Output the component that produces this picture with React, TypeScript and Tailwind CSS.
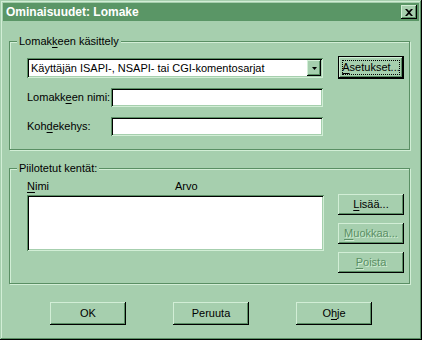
const raised =
  "shadow-[inset_-1px_-1px_0_#000,inset_1px_1px_0_#d2eed6,inset_-2px_-2px_0_#5a8f64]";
const sunken =
  "shadow-[inset_1px_1px_0_#5a8f64,inset_-1px_-1px_0_#d2eed6,inset_2px_2px_0_#000,inset_-2px_-2px_0_#a6cfae]";

function U({ children }: { children: string }) {
  return <span className="underline underline-offset-[2px]">{children}</span>;
}

function Btn({
  children,
  className = "",
  disabled = false,
}: {
  children: React.ReactNode;
  className?: string;
  disabled?: boolean;
}) {
  return (
    <div
      className={`flex items-center justify-center bg-[#a6cfae] ${raised} ${
        disabled ? "text-[#5a8f64] [text-shadow:1px_1px_0_#d2eed6]" : "text-black"
      } ${className}`}
    >
      {children}
    </div>
  );
}

function Group({
  title,
  className = "",
  children,
}: {
  title: React.ReactNode;
  className?: string;
  children: React.ReactNode;
}) {
  return (
    <div
      className={`relative border border-[#5a8f64] shadow-[1px_1px_0_#d2eed6,inset_1px_1px_0_#d2eed6] ${className}`}
    >
      <div className="absolute -top-[8px] left-[7px] bg-[#a6cfae] px-[2px] leading-[14px]">
        {title}
      </div>
      {children}
    </div>
  );
}

export default function App() {
  return (
    <div className="h-[340px] w-[422px] bg-[#a6cfae] p-[3px] font-['Liberation_Sans',Arial,sans-serif] text-[11px] text-black shadow-[inset_-1px_-1px_0_#000,inset_1px_1px_0_#a6cfae,inset_-2px_-2px_0_#5a8f64,inset_2px_2px_0_#d2eed6]">
      {/* title bar */}
      <div className="flex h-[18px] items-center justify-between bg-[#5a9666] pl-[3px] pr-[2px]">
        <span className="text-[12px] font-bold text-white">Ominaisuudet: Lomake</span>
        <div className={`flex h-[14px] w-[16px] items-center justify-center bg-[#a6cfae] ${raised}`}>
          <svg width="8" height="7" viewBox="0 0 8 7">
            <path d="M0 0h2l2 2 2-2h2L5 3.5 8 7H6L4 5 2 7H0l3-3.5z" fill="#000" />
          </svg>
        </div>
      </div>

      <div className="px-[6px]">
        <Group
          title={
            <>
              Lomak<U>k</U>een käsittely
            </>
          }
          className="mt-[20px] h-[109px] w-[401px]"
        >
          <div className="flex pl-[17px] pt-[14px]">
            <div className="flex w-[296px] flex-col">
              <div className={`mt-[2px] flex h-[20px] items-center bg-white ${sunken} pl-[4px] pr-[2px]`}>
                <span className="flex-1">Käyttäjän ISAPI-, NSAPI- tai CGI-komentosarjat</span>
                <div className={`flex h-[16px] w-[14px] items-center justify-center bg-[#a6cfae] ${raised}`}>
                  <svg width="5" height="3" viewBox="0 0 5 3">
                    <path d="M0 0h5L2.5 3z" fill="#000" />
                  </svg>
                </div>
              </div>
              <div className="mt-[10px] flex h-[19px] items-center">
                <span className="w-[84px]">
                  Lomakk<U>e</U>en nimi:
                </span>
                <div className={`h-full flex-1 bg-white ${sunken}`} />
              </div>
              <div className="mt-[10px] flex h-[19px] items-center">
                <span className="w-[84px]">
                  Koh<U>d</U>ekehys:
                </span>
                <div className={`h-full flex-1 bg-white ${sunken}`} />
              </div>
            </div>
            <div className="ml-[15px] flex h-[23px] w-[66px] items-center justify-center border border-black bg-[#a6cfae]">
              <div className={`flex h-full w-full items-center justify-center p-[3px] ${raised}`}>
                <div className="flex h-full w-full items-center justify-center border border-dotted border-black">
                  <U>A</U>setukset...
                </div>
              </div>
            </div>
          </div>
        </Group>

        <Group title="Piilotetut kentät:" className="mt-[18px] h-[116px] w-[401px]">
          <div className="flex pl-[17px] pt-[10px]">
            <div className="flex w-[297px] flex-col">
              <div className="flex h-[14px] items-center">
                <span className="w-[148px]">
                  <U>N</U>imi
                </span>
                <span>Arvo</span>
              </div>
              <div className={`mt-[2px] h-[56px] bg-white ${sunken}`} />
            </div>
            <div className="ml-[14px] flex flex-col gap-[8px] pt-[15px]">
              <Btn className="h-[21px] w-[66px]">
                <U>L</U>isää...
              </Btn>
              <Btn className="h-[21px] w-[66px]" disabled>
                <U>M</U>uokkaa...
              </Btn>
              <Btn className="h-[21px] w-[66px]" disabled>
                <U>P</U>oista
              </Btn>
            </div>
          </div>
        </Group>

        <div className="mt-[18px] flex gap-[47px] pl-[41px]">
          <Btn className="h-[23px] w-[76px]">OK</Btn>
          <Btn className="h-[23px] w-[76px]">Peruuta</Btn>
          <Btn className="h-[23px] w-[76px]">
            O<U>h</U>je
          </Btn>
        </div>
      </div>
    </div>
  );
}
